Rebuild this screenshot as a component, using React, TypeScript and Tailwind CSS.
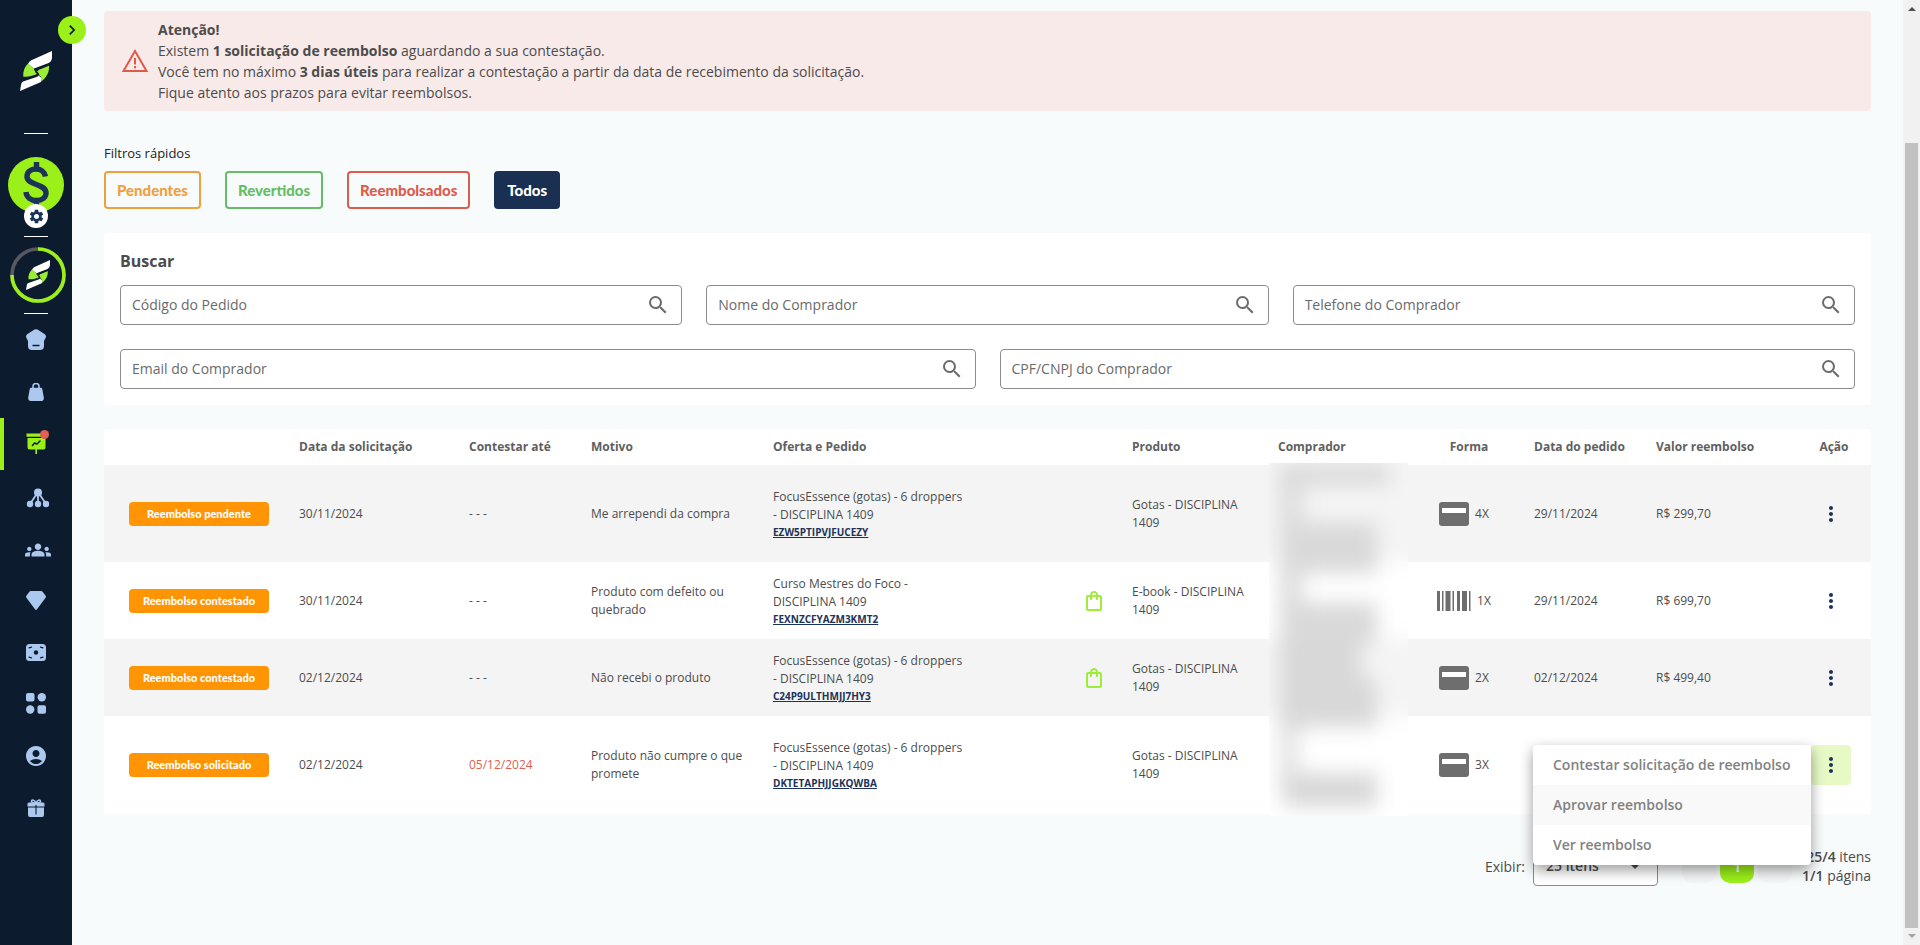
import React from "react";
import {
  MdGroups, MdSearch, MdMoreVert, MdSettings, MdKeyboardArrowRight, MdOutlineShoppingBag, MdAccountCircle,
} from "react-icons/md";

const Logo = ({ className }: { className: string }) => (
  <svg viewBox="0 0 32 40" className={className} aria-hidden="true">
    <path d="M32 0v5c0 4-1 6-4 7.200L14 17.500 8 13c1-2.500 2.500-3.500 5-4.500z" fill="#fff" />
    <path d="M0 40l1-6c.4-2.500 1.500-4 4-5l13-5 4 3.500-1 3.500z" fill="#fff" />
    <path d="M8 12.500C4.500 16 3 20 3.200 25.500c4 .8 10-.5 15-3C18.500 20 17 19.500 14 19.500v-2z" fill="#9BEC35" />
    <path d="M29 14.500c.5 6-2 12-8 16 1-3 .8-4.500-2.500-6.800-.8-2-.8-3.500 0-4.700C20 18 25 16.500 29 14.500z" fill="#9BEC35" />
    <path d="M30 13.200L17.500 18c-2.500 1-2 2.800-.2 4 1.800 1.300 1.200 2.400-1 3.200L2 30" fill="none" stroke="#0c1c2e" strokeWidth="1.800" />
  </svg>
);

const Divider = () => <span className="h-px w-6 shrink-0 bg-white" />;

const navIcons: { label: string; icon: React.ReactNode }[] = [
  {
    label: "Início",
    icon: (
      <svg viewBox="0 0 20 22" className="h-[22px] w-5">
        <path d="M8.500 .6a3 3 0 0 1 3 0l7 4.400c1.200.8 1.800 2 1.300 3.500L18 12v5a4 4 0 0 1-4 4H6a4 4 0 0 1-4-4v-5L.2 8.500C-.2 7 .4 5.800 1.500 5z" fill="currentColor" />
        <path d="M7 16.500h6" stroke="#0c1c2e" strokeWidth="1.300" strokeLinecap="round" />
      </svg>
    ),
  },
  {
    label: "Produtos",
    icon: (
      <svg viewBox="0 0 16 19" className="h-[19px] w-4">
        <path d="M5 6V3.500a3 3 0 0 1 6 0V6" fill="none" stroke="currentColor" strokeWidth="1.600" />
        <path d="M3.500 4.800h9c1 0 1.500.5 1.800 1.400l1.500 8.300c.3 2-.8 3.500-2.800 3.500H3C1 18 0 16.500.2 14.500l1.500-8.300c.3-.9.800-1.400 1.800-1.400z" fill="currentColor" />
      </svg>
    ),
  },
  {
    label: "Vendas",
    icon: (
      <svg viewBox="0 2 24 24" className="h-6 w-6">
        <path d="M2.500 3.500H21v3.300H2.500zM3.500 8h18v9.500a2 2 0 0 1-2 2h-14a2 2 0 0 1-2-2z" fill="#9BF01A" />
        <path d="M8.500 15.500l2-2.500 2.500 1 3-3" fill="none" stroke="#0c1c2e" strokeWidth="1.500" strokeLinecap="round" strokeLinejoin="round" />
        <path d="M12.200 19v5" stroke="#9BF01A" strokeWidth="1.600" />
      </svg>
    ),
  },
  {
    label: "Afiliados",
    icon: (
      <svg viewBox="0 -4 24 24" className="ml-1 size-6">
        <path d="M12 4v12M12 4L4 16M12 4l8 12" stroke="currentColor" strokeWidth="1.800" />
        <circle cx="12" cy="4.500" r="4" fill="currentColor" />
        <circle cx="4" cy="16" r="3.200" fill="currentColor" />
        <circle cx="12" cy="16" r="3.200" fill="currentColor" />
        <circle cx="20" cy="16" r="3.200" fill="currentColor" />
      </svg>
    ),
  },
  {
    label: "Equipe",
    icon: <MdGroups className="mt-1 ml-1 size-[26px]" />,
  },
  {
    label: "Premium",
    icon: (
      <svg viewBox="0 0 20 19" className="h-[19px] w-5">
        <path d="M4.800 0h10.400c.6 0 1 .2 1.400.7l3 4c.5.700.5 1.400 0 2L11 18.300c-.6.8-1.400.8-2 0L.4 6.700c-.5-.6-.5-1.300 0-2l3-4C3.800.2 4.200 0 4.800 0z" fill="currentColor" />
      </svg>
    ),
  },
  {
    label: "Financeiro",
    icon: (
      <svg viewBox="0 -1 20 18" className="h-[18px] w-5">
        <rect width="20" height="17" rx="3.500" fill="currentColor" />
        <circle cx="10" cy="8.500" r="2.200" fill="#0c1c2e" />
        <path d="M3 3.800l2.500-.6M17 3.800l-2.500-.6M3 13.200l2.500.6M17 13.200l-2.500.6" stroke="#0c1c2e" strokeWidth="1.200" strokeLinecap="round" />
      </svg>
    ),
  },
  {
    label: "Aplicativos",
    icon: (
      <svg viewBox="0 0 20 22" className="h-[22px] w-5" fill="currentColor">
        <rect width="8.500" height="8.500" rx="2" />
        <circle cx="15.800" cy="4.300" r="4.200" />
        <circle cx="4.200" cy="16.500" r="4.200" />
        <rect x="11.500" y="12.300" width="8.500" height="8.500" rx="2" />
      </svg>
    ),
  },
  { label: "Conta", icon: <MdAccountCircle className="size-6" /> },
  {
    label: "Prêmios",
    icon: (
      <svg viewBox="0 0 20 19" className="h-[19px] w-5">
        <path d="M10 4C9 1 5.500 0 5.500 2.500 5.500 4 8 4 10 4zm0 0c1-3 4.500-4 4.500-1.500C14.500 4 12 4 10 4z" fill="none" stroke="currentColor" strokeWidth="1.500" />
        <path d="M3 3.500h14a1.500 1.500 0 0 1 1.500 1.500v2.500h-17V5A1.500 1.500 0 0 1 3 3.500zM2 8.600h16V16a2 2 0 0 1-2 2H4a2 2 0 0 1-2-2z" fill="currentColor" />
        <path d="M10 6v9.500" stroke="#0c1c2e" strokeWidth="1.100" />
      </svg>
    ),
  },
];

function Sidebar() {
  return (
    <aside className="relative flex w-[72px] shrink-0 flex-col items-center bg-[#0c1c2e]">
      <button aria-label="Expandir menu" className="absolute top-4 -right-3.5 z-10 flex size-7 items-center justify-center rounded-full bg-[#9BF01A] text-[#0c1c2e]">
        <MdKeyboardArrowRight className="size-5" />
      </button>
      <Logo className="mt-[51px] mb-[42px] h-10 w-8" />
      <Divider />
      <div className="relative mt-[23px] mb-[23px] flex flex-col items-center">
        <svg viewBox="0 0 56 56" className="size-14" aria-hidden="true">
          <circle cx="28" cy="28" r="28" fill="#9BF01A" />
          <path d="M37.500 19.500C36.500 14.500 32.500 12 28 12c-5.500 0-9 3-9 7.500 0 9.500 19 6.500 19 16.500 0 4.500-4 7.500-9.500 7.500-5.500 0-10-3-10.500-8.500M28.500 5v8M28.500 43v7" fill="none" stroke="#1b3358" strokeWidth="5.400" />
        </svg>
        <span className="absolute top-[47px] flex size-6 items-center justify-center rounded-full bg-white text-[#1b3358]">
          <MdSettings className="size-[17px]" />
        </span>
      </div>
      <Divider />
      <div className="relative my-2.5 ml-1 flex size-14 items-center justify-center">
        <svg viewBox="0 0 56 56" className="absolute inset-0 size-14" aria-hidden="true">
          <circle cx="28" cy="28" r="26" fill="none" stroke="#57595f" strokeWidth="3.600" />
          <path d="M28 2A26 26 0 1 1 2 28" fill="none" stroke="#9BF01A" strokeWidth="3.600" />
        </svg>
        <Logo className="h-[30px] w-6" />
      </div>
      <Divider />
      <nav className="flex w-full flex-col text-[#adc8ee]">
        {navIcons.map((n, i) => (
          <a key={n.label} href="#" aria-label={n.label} className="relative flex h-[52px] items-center justify-center">
            {i === 2 && <span className="absolute inset-y-0 left-0 w-1 bg-[#9BF01A]" />}
            {n.icon}
            {i === 2 && <span className="absolute top-3 left-10 size-[9px] rounded-full bg-[#df6152]" />}
          </a>
        ))}
      </nav>
    </aside>
  );
}

function SearchField({ label }: { label: string }) {
  return (
    <div className="flex h-10 flex-1 items-center rounded-sm border border-[#8c8c8c] bg-white px-[11px]">
      <input aria-label={label} placeholder={label} className="min-w-0 flex-1 bg-transparent text-sm text-[#4a4a4a] outline-none placeholder:text-[#6a6a6a]" />
      <MdSearch className="size-6 text-[#6b6b6b]" />
    </div>
  );
}

const CardIcon = () => (
  <svg viewBox="0 0 30 24" className="h-6 w-[30px]" aria-hidden="true">
    <rect width="30" height="24" rx="3" fill="#6e6e6e" />
    <rect x="3" y="6" width="24" height="5" fill="#fff" />
  </svg>
);
const BarcodeIcon = () => (
  <svg viewBox="0 0 34 20" className="h-5 w-[34px]" aria-hidden="true" fill="#6e6e6e">
    <path d="M0 0h3v20H0zM5 0h1.500v20H5zM8.500 0h5v20h-5zM15.500 0h1.500v20h-1.500zM20 0h3v20h-3zM25 0h5v20h-5zM32 0h1.500v20H32z" />
  </svg>
);

const rows = [
  { status: "Reembolso pendente", req: "30/11/2024", until: "- - -", reason: "Me arrependi da compra", offer: "FocusEssence (gotas) - 6 droppers - DISCIPLINA 1409", code: "EZW5PTIPVJFUCEZY", bag: false, product: "Gotas - DISCIPLINA 1409", pay: "4X", date: "29/11/2024", value: "R$ 299,70", tall: true },
  { status: "Reembolso contestado", req: "30/11/2024", until: "- - -", reason: "Produto com defeito ou quebrado", offer: "Curso Mestres do Foco - DISCIPLINA 1409", code: "FEXNZCFYAZM3KMT2", bag: true, product: "E-book - DISCIPLINA 1409", pay: "1X", date: "29/11/2024", value: "R$ 699,70", tall: false },
  { status: "Reembolso contestado", req: "02/12/2024", until: "- - -", reason: "Não recebi o produto", offer: "FocusEssence (gotas) - 6 droppers - DISCIPLINA 1409", code: "C24P9ULTHMJJ7HY3", bag: true, product: "Gotas - DISCIPLINA 1409", pay: "2X", date: "02/12/2024", value: "R$ 499,40", tall: false },
  { status: "Reembolso solicitado", req: "02/12/2024", until: "05/12/2024", reason: "Produto não cumpre o que promete", offer: "FocusEssence (gotas) - 6 droppers - DISCIPLINA 1409", code: "DKTETAPHJJGKQWBA", bag: false, product: "Gotas - DISCIPLINA 1409", pay: "3X", date: "", value: "", tall: true },
];

function BuyerBlur() {
  return (
    <div className="pointer-events-none absolute -top-0.5 left-[3px] h-[353px] w-[139px] overflow-hidden bg-white">
      <svg viewBox="0 0 139 353" className="h-full w-full" aria-hidden="true">
        <defs>
          <filter id="soft" filterUnits="userSpaceOnUse" x="-60" y="-60" width="260" height="480" colorInterpolationFilters="sRGB">
            <feGaussianBlur stdDeviation="10" />
          </filter>
        </defs>
        <g filter="url(#soft)">
          <path d="M-60-60h260V98H-60zM-60 176h260v77H-60z" fill="#f4f4f4" />
          <path d="M10 2h24v264H10z" fill="#dedede" />
          <path d="M10 262h20v76H10z" fill="#e4e4e4" />
          <path d="M10 2h110v20H10zM20 60h88v50H20zM22 140h86v40H22z" fill="#d9d9d9" />
          <path d="M12 178h80v38h16v48H12zM18 310h90v34H18z" fill="#d8d8d8" />
        </g>
      </svg>
    </div>
  );
}

function ActionMenu() {
  const item = "h-10 px-5 text-left text-sm font-semibold whitespace-nowrap text-[#828282]";
  return (
    <div role="menu" className="absolute top-0 right-full z-20 flex w-[278px] flex-col rounded-sm bg-white shadow-[0_5px_14px_rgba(0,0,0,0.4)]">
      <button role="menuitem" className={item}>Contestar solicitação de reembolso</button>
      <button role="menuitem" className={`${item} bg-[#f9f9f9]`}>Aprovar reembolso</button>
      <button role="menuitem" className={item}>Ver reembolso</button>
    </div>
  );
}

function RefundTable() {
  const th = "pl-3 text-left font-bold whitespace-nowrap";
  return (
    <section className="mt-6 rounded-sm bg-white pb-px">
      <table className="w-full table-fixed text-xs leading-[18px] text-[#4c4c4c]">
        <colgroup>
          <col className="w-[183px]" /><col className="w-[170px]" /><col className="w-[122px]" /><col className="w-[182px]" />
          <col className="w-[306px]" /><col className="w-[53px]" /><col className="w-[146px]" /><col className="w-[144px]" />
          <col className="w-[112px]" /><col className="w-[122px]" /><col className="w-[151px]" /><col className="w-[76px]" />
        </colgroup>
        <thead className="text-[#5f5f5f]">
          <tr className="h-9">
            <th aria-label="Status" />
            <th className={th}>Data da solicitação</th>
            <th className={th}>Contestar até</th>
            <th className={th}>Motivo</th>
            <th className={th}>Oferta e Pedido</th>
            <th aria-label="Sacola" />
            <th className={th}>Produto</th>
            <th className={th}>Comprador</th>
            <th className="pl-1.5 font-bold">Forma</th>
            <th className={th}>Data do pedido</th>
            <th className={th}>Valor reembolso</th>
            <th className="pl-0.5 font-bold">Ação</th>
          </tr>
        </thead>
        <tbody>
          {rows.map((r, i) => (
            <tr key={r.code} className={`${r.tall ? "h-[97px]" : "h-[77px]"} ${i % 2 === 0 ? "bg-[#f4f4f4]" : "bg-white"}`}>
              <td className="pl-[25px]">
                <span className="flex h-6 w-[140px] items-center justify-center rounded-sm bg-[#ff9505] font-['Lato'] text-[11px] font-black whitespace-nowrap text-white">{r.status}</span>
              </td>
              <td className="pl-3">{r.req}</td>
              <td className={i === 3 ? "pl-3 text-[#dc6152]" : "pl-3"}>{r.until}</td>
              <td className="pl-3">{r.reason}</td>
              <td className="pl-3">
                <div className="max-w-[192px]">
                  {r.offer}
                  <a href="#" className="block text-[10px] leading-4 font-bold text-[#1b3358] underline">{r.code}</a>
                </div>
              </td>
              <td><span className="flex justify-center text-[#9fec3d]">{r.bag && <MdOutlineShoppingBag className="size-6" />}</span></td>
              <td className="pr-3 pl-3">{r.product}</td>
              <td className="relative align-top">{i === 0 && <BuyerBlur />}</td>
              <td className="pr-1">
                <span className="flex items-center justify-center gap-1.5">
                  {i === 1 ? <BarcodeIcon /> : <CardIcon />}
                  {r.pay}
                </span>
              </td>
              <td className="pl-3">{r.date}</td>
              <td className="pl-3">{r.value}</td>
              <td>
                <div className="relative ml-4 w-10">
                  <button aria-label="Ações" className={`flex size-10 items-center justify-center rounded-sm text-[#1b3358] ${i === 3 ? "bg-[#e7fac6]" : ""}`}>
                    <MdMoreVert className="size-6" />
                  </button>
                  {i === 3 && <ActionMenu />}
                </div>
              </td>
            </tr>
          ))}
        </tbody>
      </table>
    </section>
  );
}

export default function App() {
  const filter = "h-[38px] rounded-sm border-2 px-[11px] font-['Lato'] text-[15px] leading-5 font-black";
  return (
    <div className="flex min-h-screen bg-[#f8fbfc] font-['Open_Sans',sans-serif] text-[#4c4c4c]">
      <Sidebar />
      <main className="min-w-0 flex-1 px-8 pt-[11px]">
        <section role="alert" className="flex items-center gap-2 rounded-sm bg-[#f9eaea] px-4 py-2 text-sm leading-[21px]">
          <svg viewBox="0 0 30 26" className="h-[26px] w-[30px]" aria-hidden="true">
            <path d="M15 3L26.500 23h-23z" fill="none" stroke="#df5b47" strokeWidth="2" strokeLinejoin="miter" />
            <path d="M15 10v6.500M15 18v2.300" stroke="#df5b47" strokeWidth="2" />
          </svg>
          <div>
            <strong className="block">Atenção!</strong>
            <p>Existem <strong>1 solicitação de reembolso</strong> aguardando a sua contestação.</p>
            <p>Você tem no máximo <strong>3 dias úteis</strong> para realizar a contestação a partir da data de recebimento da solicitação.</p>
            <p>Fique atento aos prazos para evitar reembolsos.</p>
          </div>
        </section>

        <p className="mt-8 text-[13px] leading-5 text-[#222]">Filtros rápidos</p>
        <div className="mt-2 flex gap-6">
          <button className={`${filter} border-[#efa03c] text-[#efa03c]`}>Pendentes</button>
          <button className={`${filter} border-[#67bd67] text-[#67bd67]`}>Revertidos</button>
          <button className={`${filter} border-[#dd5c4c] text-[#dd5c4c]`}>Reembolsados</button>
          <button className={`${filter} border-[#1a3052] bg-[#1a3052] text-white`}>Todos</button>
        </div>

        <section className="mt-6 rounded-sm bg-white p-4">
          <h2 className="text-base leading-6 font-bold">Buscar</h2>
          <div className="mt-3 flex gap-6">
            <SearchField label="Código do Pedido" />
            <SearchField label="Nome do Comprador" />
            <SearchField label="Telefone do Comprador" />
          </div>
          <div className="mt-6 flex gap-6">
            <SearchField label="Email do Comprador" />
            <SearchField label="CPF/CNPJ do Comprador" />
          </div>
        </section>

        <RefundTable />

        <footer className="mt-8 flex items-center justify-end text-sm leading-[19px]">
          <label htmlFor="size" className="mr-2">Exibir:</label>
          <span className="relative flex items-center">
            <select id="size" className="h-10 w-[125px] appearance-none rounded-sm border border-[#8c8c8c] bg-white px-3 text-sm font-semibold">
              <option>25 itens</option>
            </select>
            <svg viewBox="0 0 10 5" className="pointer-events-none absolute right-[18px] h-[5px] w-2.5"><path d="M0 0h10L5 5z" fill="#4c4c4c" /></svg>
          </span>
          <div className="mr-2.5 ml-6 flex gap-1">
            <span className="size-[34px] rounded-[10px] bg-[#f3f5f6]" />
            <button className="size-[34px] rounded-[10px] bg-[#9BF01A] font-bold text-white">1</button>
            <span className="size-[34px] rounded-[10px] bg-[#f3f5f6]" />
          </div>
          <p className="text-right"><b className="font-semibold">25/4</b> itens<br /><b className="font-semibold">1/1</b> página</p>
        </footer>
      </main>
      <div className="flex w-[17px] shrink-0 flex-col items-center bg-[#f1f1f1] py-[7px]" aria-hidden="true">
        <svg viewBox="0 0 8 4" className="h-1 w-2"><path d="M0 4l4-4 4 4z" fill="#505050" /></svg>
        <span className="mt-[132px] mb-[6px] w-[13px] flex-1 bg-[#c1c1c1]" />
        <svg viewBox="0 0 8 4" className="h-1 w-2"><path d="M0 0h8L4 4z" fill="#a3a3a3" /></svg>
      </div>
    </div>
  );
}
